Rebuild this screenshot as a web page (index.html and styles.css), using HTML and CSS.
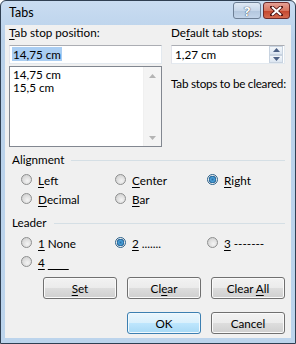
FILE: index.html
```html
<!DOCTYPE html>
<html lang="en">
<head>
    <meta charset="UTF-8">
    <title>Tabs</title>
    <link rel="stylesheet" href="styles.css">
</head>
<body>
    <div class="window">
        <!-- Title bar -->
        <div class="titlebar">
            <span class="title">Tabs</span>
            <div class="caption-buttons">
                <span class="cap-btn help">?</span>
                <span class="cap-btn close">
                    <svg width="13" height="10" viewBox="0 0 13 10">
                        <path d="M2 1 L11 9 M11 1 L2 9" stroke="#4a1010" stroke-width="3.6" stroke-linecap="square"/>
                        <path d="M2 1 L11 9 M11 1 L2 9" stroke="#fff" stroke-width="2"/>
                    </svg>
                </span>
            </div>
        </div>

        <div class="client">
            <!-- Tab stop fields -->
            <div class="top">
                <div class="col-left">
                    <div class="label"><u>T</u>ab stop position:</div>
                    <div class="textbox"><span class="sel">14,75 cm</span></div>
                    <div class="listbox">
                        <div class="items">
                            <div>14,75 cm</div>
                            <div>15,5 cm</div>
                        </div>
                        <div class="scrollbar">
                            <svg width="7" height="4" viewBox="0 0 7 4"><path d="M0 4 L3.5 0 L7 4 Z" fill="#b4b4b4"/></svg>
                            <svg width="7" height="4" viewBox="0 0 7 4"><path d="M0 0 L3.5 4 L7 0 Z" fill="#b4b4b4"/></svg>
                        </div>
                    </div>
                </div>
                <div class="col-right">
                    <div class="label">De<u>f</u>ault tab stops:</div>
                    <div class="spinbox">
                        <span class="spin-value">1,27 cm</span>
                        <div class="spin-btns">
                            <span class="spin-btn"><svg width="7" height="4" viewBox="0 0 7 4"><path d="M0 4 L3.5 0 L7 4 Z" fill="#4d6185"/></svg></span>
                            <span class="spin-btn"><svg width="7" height="4" viewBox="0 0 7 4"><path d="M0 0 L3.5 4 L7 0 Z" fill="#4d6185"/></svg></span>
                        </div>
                    </div>
                    <div class="cleared-label">Tab stops to be cleared:</div>
                </div>
            </div>

            <!-- Alignment -->
            <div class="group-head"><span>Alignment</span><span class="rule"></span></div>
            <div class="radio-grid">
                <div class="radio"><span class="dot"></span><u>L</u>eft</div>
                <div class="radio"><span class="dot"></span><u>C</u>enter</div>
                <div class="radio"><span class="dot checked"></span><u>R</u>ight</div>
                <div class="radio"><span class="dot"></span><u>D</u>ecimal</div>
                <div class="radio"><span class="dot"></span><u>B</u>ar</div>
            </div>

            <!-- Leader -->
            <div class="group-head leader"><span>Leader</span><span class="rule"></span></div>
            <div class="radio-grid">
                <div class="radio"><span class="dot"></span><u>1</u>&nbsp;None</div>
                <div class="radio"><span class="dot checked"></span><u>2</u>&nbsp;.......</div>
                <div class="radio"><span class="dot"></span><u>3</u>&nbsp;-------</div>
                <div class="radio"><span class="dot"></span><u>4</u>&nbsp;<u>&nbsp;&nbsp;&nbsp;&nbsp;&nbsp;&nbsp;&nbsp;</u></div>
            </div>

            <!-- Buttons -->
            <div class="button-row">
                <button><u>S</u>et</button>
                <button>Cl<u>e</u>ar</button>
                <button>Clear <u>A</u>ll</button>
            </div>
            <div class="button-row ok-row">
                <button class="default">OK</button>
                <button>Cancel</button>
            </div>
        </div>
    </div>
</body>
</html>
```

FILE: styles.css
```css
body {
    margin: 0;
    padding: 0;
    font-family: 'Lato', 'Noto Sans', sans-serif;
    font-size: 11.7px;
    color: #000;
    background: #fff;
}

u {
    text-decoration-thickness: 1px;
    text-underline-offset: 2px;
}

.window {
    width: 296px;
    height: 344px;
    box-sizing: border-box;
    border: 1px solid #2f3f52;
    border-radius: 6px 6px 0 0;
    background: linear-gradient(#c9dcf1, #b9d1ea 40px, #bcd4ec);
    padding: 0 4px 5px;
    display: flex;
    flex-direction: column;
}

/* Title bar */
.titlebar {
    height: 25px;
    display: flex;
    align-items: flex-start;
    justify-content: space-between;
}

.title {
    margin: 4px 0 0 4px;
    font-size: 12.5px;
    line-height: 16px;
}

.caption-buttons {
    display: flex;
    gap: 2px;
    margin: 1px 1px 0 0;
}

.cap-btn {
    height: 17px;
    box-sizing: border-box;
    border: 1px solid #6d7f95;
    border-radius: 3px;
    display: flex;
    align-items: center;
    justify-content: center;
}

.help {
    width: 28px;
    background: linear-gradient(#dfe9f5, #c6d6e9 50%, #b2c6dd 51%, #c3d5ea);
    color: #fff;
    font-family: 'Noto Sans', sans-serif;
    font-weight: bold;
    font-size: 13px;
    text-shadow: 0 0 1px #36465a, 0 0 1px #36465a;
}

.close {
    width: 27px;
    border-color: #6b2a2a;
    background: linear-gradient(#e6a196, #d7755f 50%, #c4452c 51%, #d46a4f);
}

/* Client area */
.client {
    flex: 1;
    background: #f0f0f0;
    padding: 0 6px 4px 4px;
    display: flex;
    flex-direction: column;
}

.top {
    display: flex;
    gap: 9px;
}

.col-left {
    width: 153px;
    flex-shrink: 0;
    display: flex;
    flex-direction: column;
}

.col-right {
    flex: 1;
    min-width: 0;
    display: flex;
    flex-direction: column;
}

.label {
    line-height: 15px;
    height: 20px;
}

.textbox {
    height: 19px;
    box-sizing: border-box;
    border: 1px solid #abadb3;
    border-color: #abadb3 #e3e9ef #e3e9ef #e2e3ea;
    background: #fff;
    padding: 1px 0 0 2px;
    line-height: 15px;
}

.sel {
    background: #a9cdf2;
    padding: 0 1px;
}

.listbox {
    margin-top: 2px;
    height: 81px;
    box-sizing: border-box;
    border: 1px solid #828790;
    background: #fff;
    display: flex;
}

.items {
    flex: 1;
    padding: 1px 0 0 3px;
    line-height: 13px;
}

.scrollbar {
    width: 17px;
    background: #f4f4f4;
    border-left: 1px solid #f0f0f0;
    display: flex;
    flex-direction: column;
    justify-content: space-between;
    align-items: center;
    padding: 7px 0 6px;
}

.spinbox {
    height: 19px;
    box-sizing: border-box;
    border: 1px solid #abadb3;
    border-color: #abadb3 #e3e9ef #e3e9ef #e2e3ea;
    background: #fff;
    display: flex;
    align-items: stretch;
}

.spin-value {
    flex: 1;
    padding-left: 3px;
    line-height: 16px;
}

.spin-btns {
    width: 14px;
    margin: 0 1px 0 0;
    display: flex;
    flex-direction: column;
}

.spin-btn {
    flex: 1;
    display: flex;
    align-items: center;
    justify-content: center;
    border: 1px solid #c8d3e0;
    background: linear-gradient(#f4f7fb, #dce6f1);
}

.cleared-label {
    margin-top: 12px;
    line-height: 15px;
    white-space: nowrap;
    letter-spacing: -0.25px;
}

/* Group headings */
.group-head {
    display: flex;
    align-items: center;
    margin-top: 5px;
    padding-left: 3px;
    line-height: 15px;
}

.group-head.leader {
    margin-top: 7px;
}

.rule {
    flex: 1;
    height: 1px;
    background: #d5dfe5;
    margin: 1px 0 0 7px;
}

.radio-grid {
    display: grid;
    grid-template-columns: 94px 92px 1fr;
    padding-left: 12px;
    margin-top: 3px;
}

.radio {
    height: 19px;
    display: flex;
    align-items: center;
}

.dot {
    width: 11px;
    height: 11px;
    box-sizing: border-box;
    border: 1px solid #8e8f8f;
    border-radius: 50%;
    background: radial-gradient(circle at 60% 65%, #f4f4f4, #c9c9c9);
    margin-right: 6px;
}

.dot.checked {
    background: radial-gradient(circle, #2c6ea5 0, #4aa0d8 2px, #1f5f94 3.5px, #e8e8e8 4px);
    border-color: #2c628b;
}

/* Buttons */
.button-row {
    display: flex;
    justify-content: flex-end;
    gap: 10px;
    margin-top: 6px;
}

.ok-row {
    margin-top: 13px;
}

button {
    width: 74px;
    height: 22px;
    font-family: inherit;
    font-size: 11.7px;
    color: #000;
    border: 1px solid #707070;
    border-radius: 3px;
    background: linear-gradient(#f2f2f2, #ebebeb 50%, #dddddd 51%, #cfcfcf);
    box-shadow: inset 0 0 0 1px #fafafa;
    padding: 0;
}

button.default {
    border-color: #3c7fb1;
    background: linear-gradient(#eaf6fd, #d9f0fc 50%, #bee6fd 51%, #a7d9f5);
    box-shadow: inset 0 0 0 1px #f0f9fe;
}
```
